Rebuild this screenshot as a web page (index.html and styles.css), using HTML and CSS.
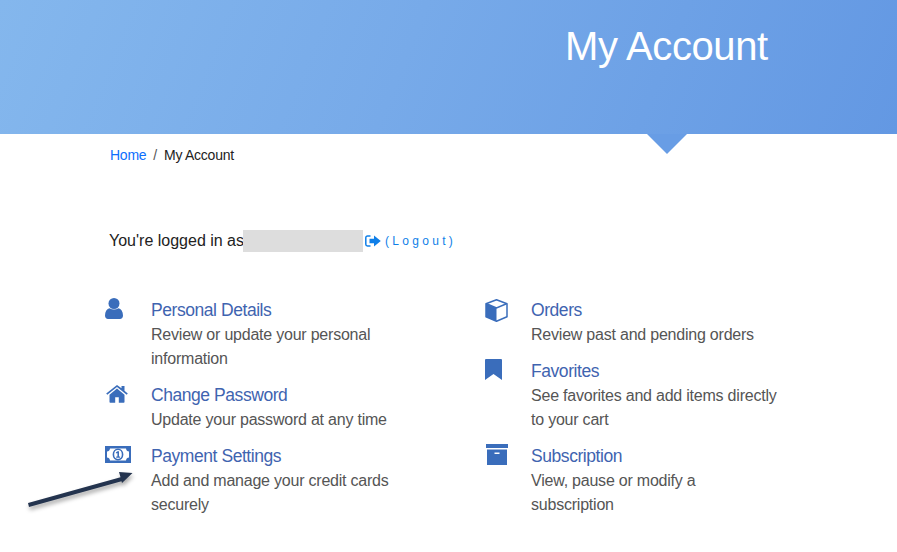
FILE: index.html
```html
<!DOCTYPE html>
<html lang="en">
<head>
<meta charset="utf-8">
<title>My Account</title>
<link rel="stylesheet" href="styles.css">
</head>
<body>
<header class="hero">
  <h1 class="hero-title">My Account</h1>
  <span class="hero-notch"></span>
</header>
<main class="page">
  <nav class="crumbs"><a href="#">Home</a><span class="crumb-sep">/</span><span>My Account</span></nav>
  <p class="login">
    <span class="login-text">You're logged in as</span><span class="redacted"></span>
    <svg class="logout-icon" viewBox="0 0 16 12"><path d="M5.500 1H2.500A1.700 1.700 0 0 0 .8 2.700v6.600A1.700 1.700 0 0 0 2.500 11h3" fill="none" stroke="currentColor" stroke-width="1.500"/><path d="M4.500 3.800h4.500V.6L15.800 6 9 11.400V8.200H4.500z" fill="currentColor"/></svg>
    <a class="logout" href="#">(Logout)</a>
  </p>
  <div class="menu">
    <div class="col">
      <div class="item">
        <svg class="icon icon-user" viewBox="0 0 18 21"><circle cx="9" cy="5.500" r="5.500"/><path d="M0 17.500C0 13.500 2 11 4.500 10.300c2.800 1.700 6.200 1.700 9 0C16 11 18 13.500 18 17.500c0 2.200-1.300 3.500-3 3.500H3c-1.700 0-3-1.300-3-3.500z"/></svg>
        <div><a href="#">Personal Details</a><p>Review or update your personal information</p></div>
      </div>
      <div class="item">
        <svg class="icon icon-home" viewBox="0 0 22 18"><path d="M11 3.400 3.500 9.700V17a.7.700 0 0 0 .7.700h5v-5.500h3.600v5.500h5a.7.700 0 0 0 .7-.7V9.700z"/><path d="M21.800 8.400 18.500 5.700V1h-3v2.200L11 0 .2 8.400l1.100 1.400L11 2l9.700 7.800z"/></svg>
        <div><a href="#">Change Password</a><p>Update your password at any time</p></div>
      </div>
      <div class="item">
        <svg class="icon icon-money" viewBox="0 0 26 17"><path d="M0 0h26v17H0z"/><path d="M5 2.500h16c.2 1.800 1.400 2.900 3 3v6c-1.600.1-2.800 1.200-3 3H5c-.2-1.800-1.400-2.900-3-3v-6c1.600-.1 2.800-1.200 3-3z" fill="#fff"/><ellipse cx="13" cy="8.500" rx="4.600" ry="5.200" fill="#fff" stroke="#3a6dbb" stroke-width="1.600"/><path d="M12.500 5.200h1.500v5.300h1.100v1.300h-3.900v-1.300h1.200V7l-1 .6-.6-1z"/></svg>
        <div><a href="#">Payment Settings</a><p>Add and manage your credit cards securely</p></div>
      </div>
    </div>
    <div class="col">
      <div class="item">
        <svg class="icon icon-box" viewBox="0 0 23 23"><path d="M11.500.8 1 4.800v13l10.500 4.400 10.500-4.400v-13z" fill="#fff" stroke="#3a6dbb" stroke-width="1.500" stroke-linejoin="round"/><path d="M1 4.800 11.500 9v13.200L1 17.800z"/><path d="M1.500 4.800 11.500 9l10-4.200" fill="none" stroke="#3a6dbb" stroke-width="1.500"/></svg>
        <div><a href="#">Orders</a><p>Review past and pending orders</p></div>
      </div>
      <div class="item">
        <svg class="icon icon-mark" viewBox="0 0 17 21"><path d="M1 0h15a1 1 0 0 1 1 1v20l-8.500-6L0 21V1a1 1 0 0 1 1-1z"/></svg>
        <div><a href="#">Favorites</a><p>See favorites and add items directly to your cart</p></div>
      </div>
      <div class="item">
        <svg class="icon icon-archive" viewBox="0 0 22 21"><path d="M0 0h22v4H0z"/><path fill-rule="evenodd" d="M1 5.500h20V21H1zM8.500 8.500v1.500h5V8.500z"/></svg>
        <div><a href="#">Subscription</a><p>View, pause or modify a subscription</p></div>
      </div>
    </div>
  </div>
</main>
<svg class="arrow" viewBox="0 0 110 40"><path d="M2 33 94.500 7.300 93 2l13.500 1L96 13l-.5-1.700L3 37z"/></svg>
</body>
</html>
```
FILE: styles.css
```css
* { box-sizing: border-box; }
html, body { margin: 0; padding: 0; }
body {
  position: relative;
  width: 897px;
  height: 552px;
  overflow: hidden;
  background: #fff;
  font-family: "Liberation Sans", Arial, sans-serif;
  color: #222;
}
.hero {
  position: relative;
  height: 134px;
  padding-left: 565px;
  background: linear-gradient(112deg, #84b7ed 0%, #77aae9 45%, #6398e3 100%);
}
.hero-title {
  margin: 0;
  padding-top: 23px;
  font-size: 40px;
  line-height: 46px;
  font-weight: 400;
  letter-spacing: -0.400px;
  color: #fff;
}
.hero-notch {
  position: absolute;
  left: 647px;
  top: 134px;
  width: 0;
  height: 0;
  border-left: 20px solid transparent;
  border-right: 20px solid transparent;
  border-top: 20px solid #689de5;
}
.page { padding: 0 0 0 105px; }
.crumbs {
  display: flex;
  padding: 13px 0 0 5px;
  font-size: 14px;
  line-height: 16px;
  letter-spacing: -0.250px;
  color: #222;
}
.crumbs a { color: #0d6efd; text-decoration: none; }
.crumb-sep { margin: 0 7px; color: #555; }
.login {
  display: flex;
  align-items: center;
  margin: 67px 0 0 4px;
  font-size: 16px;
  line-height: 22px;
  color: #222;
}
.login-text { width: 134px; white-space: nowrap; }
.redacted {
  width: 120px;
  height: 22px;
  background: #dddddd;
}
.logout-icon {
  width: 16px;
  height: 12px;
  margin: 0 4px 0 2px;
  color: #0f7fe8;
}
.logout {
  font-size: 12px;
  letter-spacing: 3.300px;
  color: #0f7fe8;
  text-decoration: none;
}
.menu { display: flex; margin-top: 46px; }
.col { width: 380px; }
.item {
  display: flex;
  margin-bottom: 12px;
  font-size: 16px;
  line-height: 24px;
}
.item a {
  display: block;
  height: 25px;
  font-size: 17.500px;
  letter-spacing: -0.440px;
  color: #3f64b0;
  text-decoration: none;
}
.item p { margin: 0; width: 249px; color: #555; letter-spacing: -0.220px; }
.icon {
  flex: none;
  margin-right: 20px;
  fill: #3a6dbb;
}
.icon-user { width: 18px; height: 21px; margin: 0 28px 0 0; }
.icon-home { width: 22px; height: 18px; margin: 2px 23px 0 1px; }
.icon-money { width: 26px; height: 17px; margin: 2px 20px 0 0; }
.icon-box { width: 23px; height: 23px; margin: 1px 23px 0 0; }
.icon-mark { width: 17px; height: 21px; margin: 0 29px 0 0; }
.icon-archive { width: 22px; height: 21px; margin: 0 23px 0 1px; }
.arrow {
  position: absolute;
  left: 26px;
  top: 470px;
  width: 110px;
  height: 40px;
  fill: #24344f;
  filter: drop-shadow(1px 3px 2px rgba(0,0,0,.35));
}
```
